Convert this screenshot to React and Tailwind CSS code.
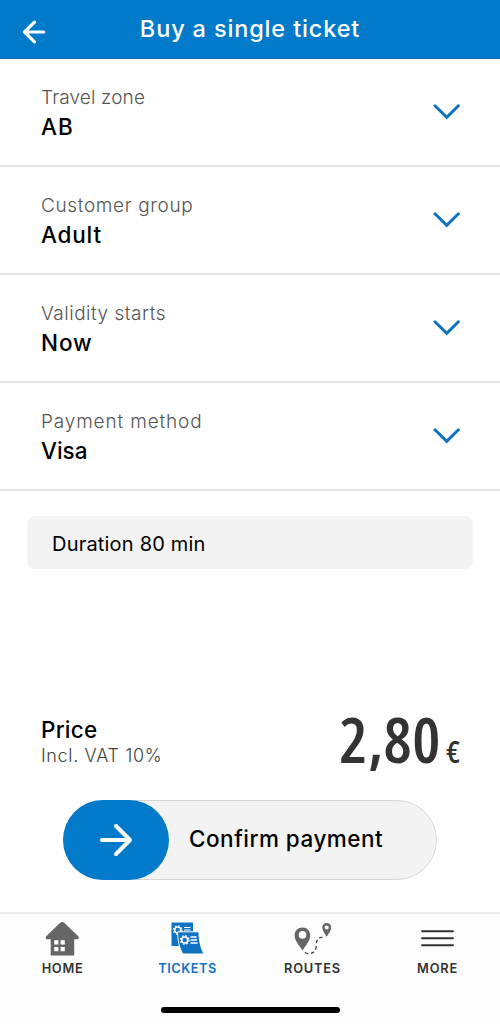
import React, { useState } from 'react';

const options = [
  { label: 'Travel zone', value: 'AB', labelClass: 'tracking-[0.15px]', valueClass: 'tracking-[1px]' },
  { label: 'Customer group', value: 'Adult', labelClass: 'tracking-[0.65px]', valueClass: 'tracking-[0.8px]' },
  { label: 'Validity starts', value: 'Now', labelClass: 'tracking-[0.5px]', valueClass: 'tracking-[0.9px]' },
  { label: 'Payment method', value: 'Visa', labelClass: 'tracking-[0.85px]', valueClass: 'tracking-[0px]' },
];

function ArrowLeft() {
  return (
    <svg width="24" height="24" viewBox="0 0 24 24" fill="none" stroke="white" strokeWidth="3.2" strokeLinecap="round" strokeLinejoin="round">
      <path d="M21.8 12H2.5M12.5 2.2L2.5 12L12.5 21.8" />
    </svg>
  );
}

function ArrowRight() {
  return (
    <svg width="34" height="34" viewBox="0 0 34 34" fill="none" stroke="white" strokeWidth="4" strokeLinecap="round" strokeLinejoin="round">
      <path d="M3 17H31M17 3L31 17L17 31" />
    </svg>
  );
}

function Chevron() {
  return (
    <svg width="28" height="18" viewBox="0 0 28 18" fill="none" stroke="#1072c2" strokeWidth="3" strokeLinecap="round" strokeLinejoin="miter">
      <path d="M2 2.8L13.7 14.3L25.4 2.8" />
    </svg>
  );
}

function HomeIcon() {
  return (
    <svg width="36" height="36" viewBox="0 0 36 36">
      <path d="M15.2 1.8Q17.2 0.2 19.2 1.8L33.3 15.2Q34.8 18 32.5 18.3H29.2V34.5H5.7V18.3H2Q-0.2 18 1.2 15.2Z" fill="#666" />
      <path d="M9.2 19.3h4.2v4.2H9.2zM15.6 19.3h4.2v4.2h-4.2zM9.2 26h4.2v4.2H9.2zM15.6 26h4.2v4.2h-4.2z" fill="white" />
    </svg>
  );
}

function TicketsIcon() {
  return (
    <svg width="36" height="36" viewBox="0 0 36 36">
      <path d="M1.5 1.5H23V11H8.5L9.5 25H1.5Z" fill="#1072c2" />
      <circle cx="7.7" cy="9" r="3" fill="none" stroke="white" strokeWidth="1.5" />
      <circle cx="7.7" cy="9" r="4.2" fill="none" stroke="white" strokeWidth="1.2" strokeDasharray="1.6 1.7" />
      <path d="M14 6.5H20.5M14 9H20.5" stroke="white" strokeWidth="1.2" />
      <path d="M7.7 10.8H29C29 19 30.3 26 34 33H12.7C8.9 26 7.7 19 7.7 10.8Z" fill="#1072c2" stroke="white" strokeWidth="1" />
      <circle cx="14.7" cy="19" r="3" fill="none" stroke="white" strokeWidth="1.6" />
      <circle cx="14.7" cy="19" r="4.3" fill="none" stroke="white" strokeWidth="1.4" strokeDasharray="1.7 1.68" />
      <path d="M20.5 16H26.5M20.5 19H27M20.5 22H27.5" stroke="white" strokeWidth="1.4" />
    </svg>
  );
}

function RoutesIcon() {
  return (
    <svg width="42" height="36" viewBox="0 0 42 36">
      <path fillRule="evenodd" d="M10.5 6.5C5.9 6.5 2.6 9.8 2.6 14.3C2.6 19.5 6.5 23.5 10.5 29.5C14.5 23.5 18.2 19.5 18.2 14.3C18.2 9.8 15 6.5 10.5 6.5ZM10.5 10.1a3.8 3.8 0 1 1 0 7.6a3.8 3.8 0 1 1 0-7.6Z" fill="#666" />
      <path fillRule="evenodd" d="M34.7 2C32.1 2 30.3 3.9 30.3 6.5C30.3 9.7 32.6 12 34.7 15.7C36.8 12 39.2 9.7 39.2 6.5C39.2 3.9 37.3 2 34.7 2ZM34.7 4.4a2.1 2.1 0 1 1 0 4.2a2.1 2.1 0 1 1 0-4.2Z" fill="#666" />
      <path d="M12.8 31.5C17.5 34.2 24 32 24.3 25C24 18 27 15 32.5 17" fill="none" stroke="#444" strokeWidth="1.4" strokeDasharray="3.6 2.6" />
    </svg>
  );
}

function MoreIcon() {
  return (
    <svg width="36" height="36" viewBox="0 0 36 36" stroke="#333" strokeWidth="1.9" strokeLinecap="round">
      <path d="M2 10.3H33M2 17.3H33M2 24.3H33" />
    </svg>
  );
}

const tabs = [
  { name: 'HOME', icon: HomeIcon, spacing: 'tracking-[0.7px]' },
  { name: 'TICKETS', icon: TicketsIcon, spacing: 'tracking-[0.5px]' },
  { name: 'ROUTES', icon: RoutesIcon, spacing: 'tracking-[0.8px]' },
  { name: 'MORE', icon: MoreIcon, spacing: 'tracking-[0.8px]' },
];

function App() {
  const [activeTab, setActiveTab] = useState('TICKETS');

  return (
    <div className="flex h-[1024px] w-[500px] flex-col overflow-hidden bg-white font-['Inter',sans-serif] text-black">
      <header className="grid h-[59px] shrink-0 grid-cols-[1fr_auto_1fr] items-center border-b border-[#1969a8] bg-[#007ac9] px-[22px]">
        <button type="button" aria-label="Back" className="mt-[6px] w-6">
          <ArrowLeft />
        </button>
        <h1 className="text-[23.5px] font-medium leading-[58px] tracking-[0.85px] text-white">Buy a single ticket</h1>
      </header>

      <main className="flex flex-1 flex-col">
        {options.map((option) => (
          <button
            key={option.label}
            type="button"
            className="flex h-[108px] w-full items-center justify-between border-b-2 border-[#e5e5e5] pl-[41px] pr-[39px] text-left"
          >
            <span className="flex flex-col">
              <span className={`text-[19px] font-light leading-[29px] text-[#555] ${option.labelClass}`}>{option.label}</span>
              <span className={`text-[22.5px] font-medium leading-[29px] ${option.valueClass}`}>{option.value}</span>
            </span>
            <Chevron />
          </button>
        ))}

        <div className="mx-[27px] mt-[25px] flex h-[53px] items-center rounded-lg bg-[#f3f3f3] px-[25px] pt-[3px] text-[20px] tracking-[0.2px]">
          Duration 80 min
        </div>

        <div className="mt-[138px] flex h-[70px] items-center justify-between pl-[41px] pr-[40px]">
          <div>
            <p className="text-[22.5px] font-medium leading-[27px] tracking-[0.2px]">Price</p>
            <p className="text-[18px] font-light leading-[25px] tracking-[0.65px] text-[#444]">Incl. VAT 10%</p>
          </div>
          <p className="-mt-[6px] flex items-baseline font-['Open_Sans',sans-serif] font-semibold text-[#333] [font-stretch:77%]">
            <span className="text-[63px] leading-[70px] tracking-[0.6px]">2,80</span>
            <span className="ml-[5px] text-[31px]">€</span>
          </p>
        </div>

        <button
          type="button"
          className="mx-[63px] mt-[23px] flex h-[80px] items-center rounded-full border border-[#d6d6d8] bg-[#f3f3f4]"
        >
          <span className="-ml-px flex h-[80px] w-[106px] items-center justify-center rounded-full bg-[#007ac9]">
            <ArrowRight />
          </span>
          <span className="ml-[20px] pb-[2px] text-[22.5px] font-medium tracking-[0.5px]">Confirm payment</span>
        </button>
      </main>

      <nav className="flex h-[112px] shrink-0 flex-col items-center border-t-2 border-[#e9e9e9] bg-[#fdfdfd]">
        <div className="grid w-full grid-cols-4">
          {tabs.map((tab) => (
            <button
              key={tab.name}
              type="button"
              onClick={() => setActiveTab(tab.name)}
              className={`flex flex-col items-center pt-[7px] text-[12.8px] font-semibold leading-6 ${tab.spacing} ${
                activeTab === tab.name ? 'text-[#1072c2]' : 'text-[#333]'
              }`}
            >
              <tab.icon />
              {tab.name}
            </button>
          ))}
        </div>
        <div className="mt-[26px] h-[6px] w-[179px] rounded-full bg-black" />
      </nav>
    </div>
  );
}

export default App;
